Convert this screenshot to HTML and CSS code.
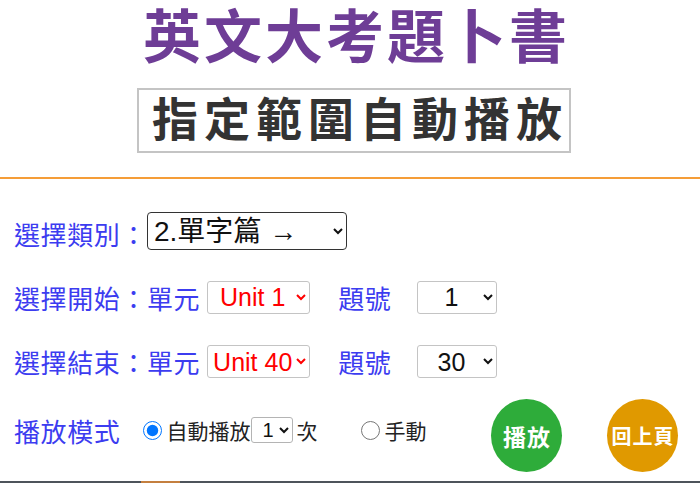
FILE: index.html
```html
<!DOCTYPE html>
<html lang="zh-Hant">
<head>
<meta charset="utf-8">
<title>指定範圍自動播放</title>
<link rel="stylesheet" href="styles.css">
</head>
<body>
<div class="page">
  <header class="head">
    <h1 class="title">英文大考題卜書</h1>
    <div class="sub-wrap"><div class="sub">指定範圍自動播放</div></div>
  </header>
  <div class="rule"></div>
  <form class="form">
    <div class="row r1">
      <span class="lbl lbl-cat">選擇類別：</span>
      <select class="sel sel-cat"><option>2.單字篇 →</option></select>
    </div>
    <div class="row r2">
      <span class="lbl">選擇開始：單元</span>
      <select class="sel sel-unit"><option>Unit 1</option></select>
      <span class="lbl num-lbl">題號</span>
      <select class="sel sel-num"><option>1</option></select>
    </div>
    <div class="row r3">
      <span class="lbl">選擇結束：單元</span>
      <select class="sel sel-unit"><option>Unit 40</option></select>
      <span class="lbl num-lbl">題號</span>
      <select class="sel sel-num"><option>30</option></select>
    </div>
    <div class="row r4">
      <span class="lbl">播放模式</span>
      <label class="opt auto"><input type="radio" name="mode" checked><span>自動播放</span></label>
      <select class="sel sel-times"><option>1</option></select>
      <span class="opt-text">次</span>
      <label class="opt manual"><input type="radio" name="mode"><span>手動</span></label>
      <button type="button" class="btn play">播放</button>
      <button type="button" class="btn back">回上頁</button>
    </div>
  </form>
  <div class="foot-line"><span class="seg seg-a"></span><span class="seg seg-b"></span><span class="seg seg-c"></span></div>
</div>
</body>
</html>
```

FILE: styles.css
```css
html, body {
  margin: 0;
  padding: 0;
  background: #ffffff;
}
body {
  font-family: "Noto Sans CJK TC", "Noto Sans", sans-serif;
  width: 700px;
  height: 500px;
  overflow: hidden;
}
.head {
  padding-top: 10px;
}
.title {
  margin: -10px 0 0 0;
  padding-left: 13px;
  text-align: center;
  font-size: 58px;
  line-height: 66px;
  letter-spacing: 3px;
  font-weight: 700;
  color: #6e3d96;
}
.sub-wrap {
  margin-top: 22px;
  padding-left: 8px;
  text-align: center;
}
.sub {
  display: inline-block;
  border: 2px solid #c4c4c4;
  padding: 0 1px 8px 13px;
  font-size: 46px;
  line-height: 53px;
  letter-spacing: 6px;
  font-weight: 700;
  color: #333333;
}
.rule {
  margin-top: 24px;
  height: 2px;
  background: #f59d38;
}
.form {
  padding: 33px 0 0 14px;
}
.row {
  display: flex;
  align-items: center;
}
.r1 { height: 38px; }
.r2 { margin-top: 31px; height: 32px; }
.r3 { margin-top: 32px; height: 33px; }
.r4 { margin-top: 21px; height: 62px; }
.lbl {
  font-size: 26px;
  letter-spacing: 0.6px;
  color: #3c3cf0;
  white-space: nowrap;
}
.lbl-cat { padding-top: 4px; }
.sel {
  font-family: "Liberation Sans", "Noto Sans CJK TC", sans-serif;
  background: #ffffff;
  padding: 0;
  margin: 0;
  box-sizing: border-box;
}
.sel-cat {
  width: 200px;
  height: 38px;
  font-size: 28px;
  color: #111111;
  border: 1px solid #333333;
  border-radius: 4px;
  padding-left: 2px;
}
.sel-unit {
  margin-left: 7px;
  width: 103px;
  height: 33px;
  font-size: 25px;
  color: #ff0000;
  border: 1px solid #c4c4c4;
  border-radius: 3px;
  text-align-last: center;
}
.num-lbl { margin-left: 28px; }
.sel-num {
  margin-left: 26px;
  width: 80px;
  height: 33px;
  font-size: 25px;
  color: #111111;
  border: 1px solid #c4c4c4;
  border-radius: 3px;
  text-align-last: center;
}
.opt {
  display: flex;
  align-items: center;
  font-size: 21px;
  color: #222222;
  white-space: nowrap;
}
.opt input {
  width: 19px;
  height: 19px;
  margin: 0 4px 0 0;
}
.auto { margin-left: 23px; }
.sel-times {
  margin-left: 1px;
  width: 42px;
  height: 26px;
  font-size: 20px;
  color: #111111;
  border: 1px solid #b4b4b4;
  border-radius: 3px;
  padding-left: 6px;
}
.opt-text {
  margin-left: 3px;
  font-size: 21px;
  color: #222222;
}
.manual { margin-left: 44px; }
.btn {
  align-self: flex-start;
  width: 71px;
  height: 73px;
  border: none;
  border-radius: 50%;
  padding: 0;
  font-family: "Noto Sans CJK TC", sans-serif;
  font-weight: 700;
  color: #ffffff;
  white-space: nowrap;
}
.play {
  margin-left: 65px;
  background: #2eac3a;
  font-size: 23px;
  letter-spacing: 1px;
}
.back {
  margin-left: 45px;
  background: #e09900;
  font-size: 20px;
  letter-spacing: 1px;
}
.foot-line {
  margin-top: 20px;
  display: flex;
  height: 2px;
}
.seg { display: block; height: 2px; }
.seg-a { width: 141px; background: #4d545b; }
.seg-b { width: 39px; background: #c47f3f; }
.seg-c { flex: 1; background: #4d545b; }
```
